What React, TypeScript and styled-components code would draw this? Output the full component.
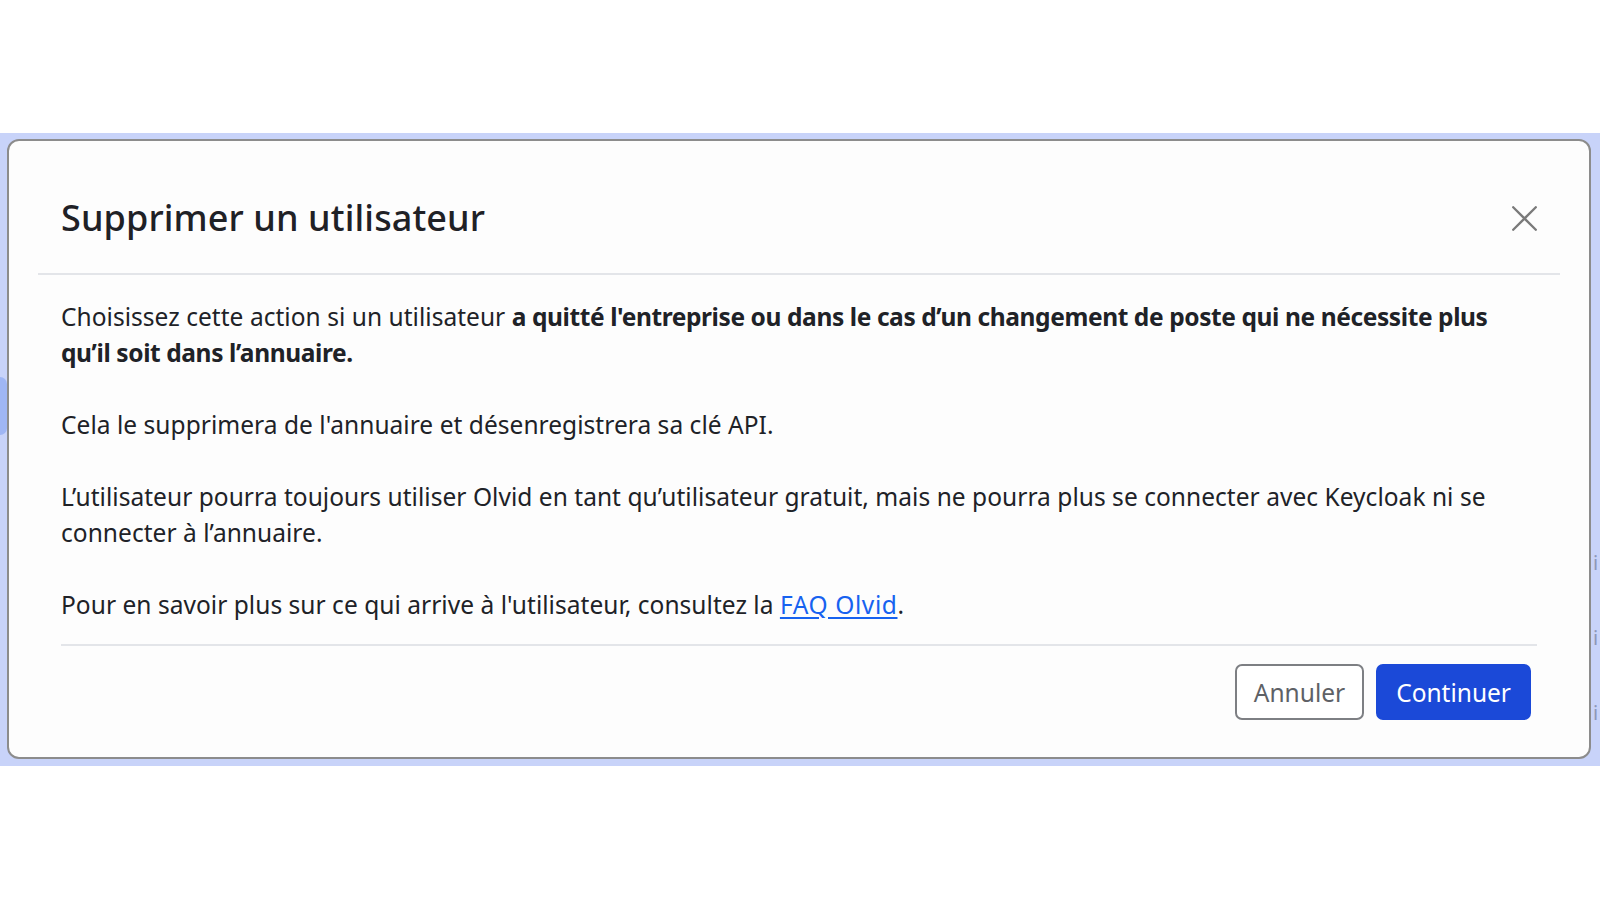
import React from "react";
import styled, { createGlobalStyle } from "styled-components";

const Global = createGlobalStyle`
  html, body { margin: 0; padding: 0; background: #ffffff; }
  body { font-family: "Noto Sans", "Open Sans", sans-serif; }
  * { box-sizing: border-box; }
`;

const Page = styled.div`
  width: 1600px;
  height: 900px;
  padding-top: 133px;
  background: #ffffff;
`;

const Backdrop = styled.div`
  height: 633px;
  background: #c8d3f9;
  padding: 6px 0 7px;
  display: flex;
`;

const Strip = styled.div<{ $w: number }>`
  width: ${(p) => p.$w}px;
  flex: none;
  display: flex;
  flex-direction: column;
  align-items: center;
  overflow: hidden;
`;

const Pill = styled.div`
  margin-top: 238px;
  width: 14px;
  height: 58px;
  margin-left: -7px;
  border-radius: 7px;
  background: #9fb6f4;
`;

const Ghost = styled.span<{ $top: number }>`
  margin-top: ${(p) => p.$top}px;
  font-size: 20px;
  line-height: 20px;
  color: #8d97b8;
  font-family: "Noto Sans", sans-serif;
`;

const Modal = styled.div`
  flex: 1;
  background: #fdfdfd;
  border: 2px solid #8c8c8c;
  border-radius: 12px;
  display: flex;
  flex-direction: column;
`;

const Header = styled.div`
  margin: 0 29px;
  padding: 55px 22px 33px 23px;
  display: flex;
  align-items: center;
  justify-content: space-between;
  border-bottom: 2px solid #e3e5e9;
`;

const Title = styled.h1`
  margin: 0;
  font-size: 36px;
  line-height: 44px;
  font-weight: 500;
  color: #1f2126;
  letter-spacing: 0.1px;
`;

const Close = styled.button`
  width: 28px;
  height: 28px;
  padding: 0;
  border: none;
  background: transparent;
  display: flex;
  align-items: center;
  justify-content: center;
  cursor: pointer;
`;

const Body = styled.div`
  margin: 0 52px;
  padding: 24px 0 21px;
  border-bottom: 2px solid #e3e5e9;
`;

const Para = styled.p`
  margin: 0 0 36px;
  font-size: 24.5px;
  line-height: 36px;
  letter-spacing: 0.04px;
  color: #202227;
  &:last-child { margin-bottom: 0; }
  strong { font-weight: 700; letter-spacing: -0.4px; }
`;

const Link = styled.a`
  color: #1762f0;
  text-decoration: underline;
  text-underline-offset: 3px;
  letter-spacing: 0.6px;
`;

const Footer = styled.div`
  display: flex;
  justify-content: flex-end;
  gap: 12px;
  padding: 18px 58px 0 0;
`;

const Button = styled.button<{ $primary?: boolean }>`
  height: 56px;
  padding: 0 ${(p) => (p.$primary ? 18 : 17)}px;
  border-radius: 7px;
  font-family: "Noto Sans", "Open Sans", sans-serif;
  font-size: 24.5px;
  border: 2px solid ${(p) => (p.$primary ? "#1b49d8" : "#7d7f83")};
  background: ${(p) => (p.$primary ? "#1b49d8" : "#ffffff")};
  color: ${(p) => (p.$primary ? "#ffffff" : "#5e6166")};
  cursor: pointer;
`;

export default function App() {
  return (
    <>
      <Global />
      <Page>
        <Backdrop>
          <Strip $w={7}>
            <Pill />
          </Strip>
          <Modal>
            <Header>
              <Title>Supprimer un utilisateur</Title>
              <Close aria-label="Fermer">
                <svg width="25" height="25" viewBox="0 0 25 25">
                  <path d="M1.2 1.2 L23.8 23.8 M23.8 1.2 L1.2 23.8" stroke="#7a7a7a" strokeWidth="2.3" strokeLinecap="round" />
                </svg>
              </Close>
            </Header>
            <Body>
              <Para>
                Choisissez cette action si un utilisateur{" "}
                <strong>
                  a quitté l'entreprise ou dans le cas d’un changement de poste qui ne nécessite plus qu’il soit dans
                  l’annuaire.
                </strong>
              </Para>
              <Para>Cela le supprimera de l'annuaire et désenregistrera sa clé API.</Para>
              <Para>
                L’utilisateur pourra toujours utiliser Olvid en tant qu’utilisateur gratuit, mais ne pourra plus se
                connecter avec Keycloak ni se connecter à l’annuaire.
              </Para>
              <Para>
                Pour en savoir plus sur ce qui arrive à l'utilisateur, consultez la <Link href="#">FAQ Olvid</Link>.
              </Para>
            </Body>
            <Footer>
              <Button>Annuler</Button>
              <Button $primary>Continuer</Button>
            </Footer>
          </Modal>
          <Strip $w={9}>
            <Ghost $top={414}>i</Ghost>
            <Ghost $top={55}>i</Ghost>
            <Ghost $top={55}>i</Ghost>
          </Strip>
        </Backdrop>
      </Page>
    </>
  );
}
